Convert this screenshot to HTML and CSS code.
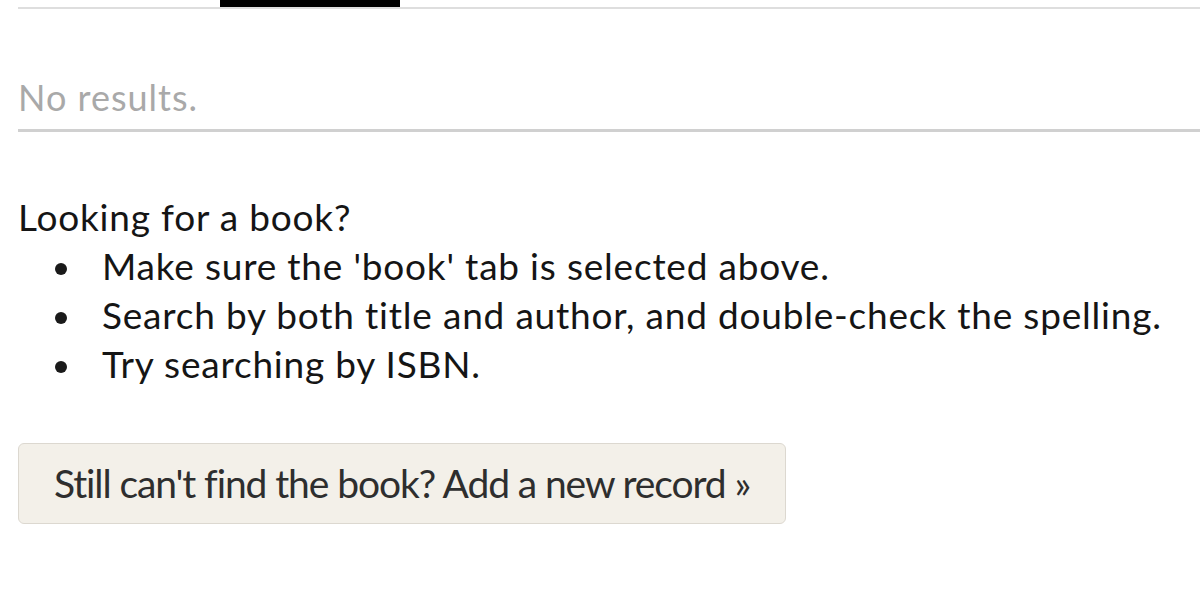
FILE: index.html
```html
<!DOCTYPE html>
<html>
<head>
<meta charset="utf-8">
<link rel="stylesheet" href="styles.css">
</head>
<body>
<div class="page">
  <div class="tabs">
    <div class="tab-gap"></div>
    <div class="tab-active"></div>
    <div class="tab-rest"></div>
  </div>
  <div class="results">No results.</div>
  <div class="help">
    <div class="help-title">Looking for a book?</div>
    <ul class="help-list">
      <li>Make sure the 'book' tab is selected above.</li>
      <li>Search by both title and author, and double-check the spelling.</li>
      <li>Try searching by ISBN.</li>
    </ul>
  </div>
  <a class="add-btn" href="#">Still can't find the book? Add a new record »</a>
</div>
</body>
</html>
```
FILE: styles.css
```css
html, body {
  margin: 0;
  padding: 0;
  background: #fff;
}
body {
  font-family: Lato, "Open Sans", sans-serif;
  color: #151515;
}
.page {
  padding-left: 18px;
}
.tabs {
  display: flex;
  height: 9px;
}
.tab-gap {
  width: 202px;
  border-bottom: 2px solid #dedede;
}
.tab-active {
  width: 180px;
  background: #000;
  height: 7px;
  border-bottom: 2px solid #dedede;
}
.tab-rest {
  flex: 1;
  border-bottom: 2px solid #dedede;
}
.results {
  font-size: 36px;
  letter-spacing: 1px;
  color: #a9a9a9;
  padding-top: 65px;
  line-height: 46px;
  padding-bottom: 9px;
  border-bottom: 3px solid #d0d0d0;
}
.help {
  margin-top: 60px;
  font-size: 37px;
  letter-spacing: 0.8px;
  line-height: 49px;
}
.help-list {
  margin: 0;
  padding-left: 37px;
  list-style: none;
}
.help-list li::before {
  content: "";
  display: inline-block;
  width: 12px;
  height: 12px;
  border-radius: 50%;
  background: #1a1a1a;
  margin-right: 35px;
  margin-bottom: 5px;
}
.add-btn {
  display: inline-block;
  margin-top: 55px;
  padding: 0 35px;
  height: 79px;
  line-height: 79px;
  font-size: 39px;
  letter-spacing: -1.1px;
  color: #2e2e2e;
  text-decoration: none;
  background: #f3f0e9;
  border: 1px solid #dcd8d0;
  border-radius: 6px;
}
```
